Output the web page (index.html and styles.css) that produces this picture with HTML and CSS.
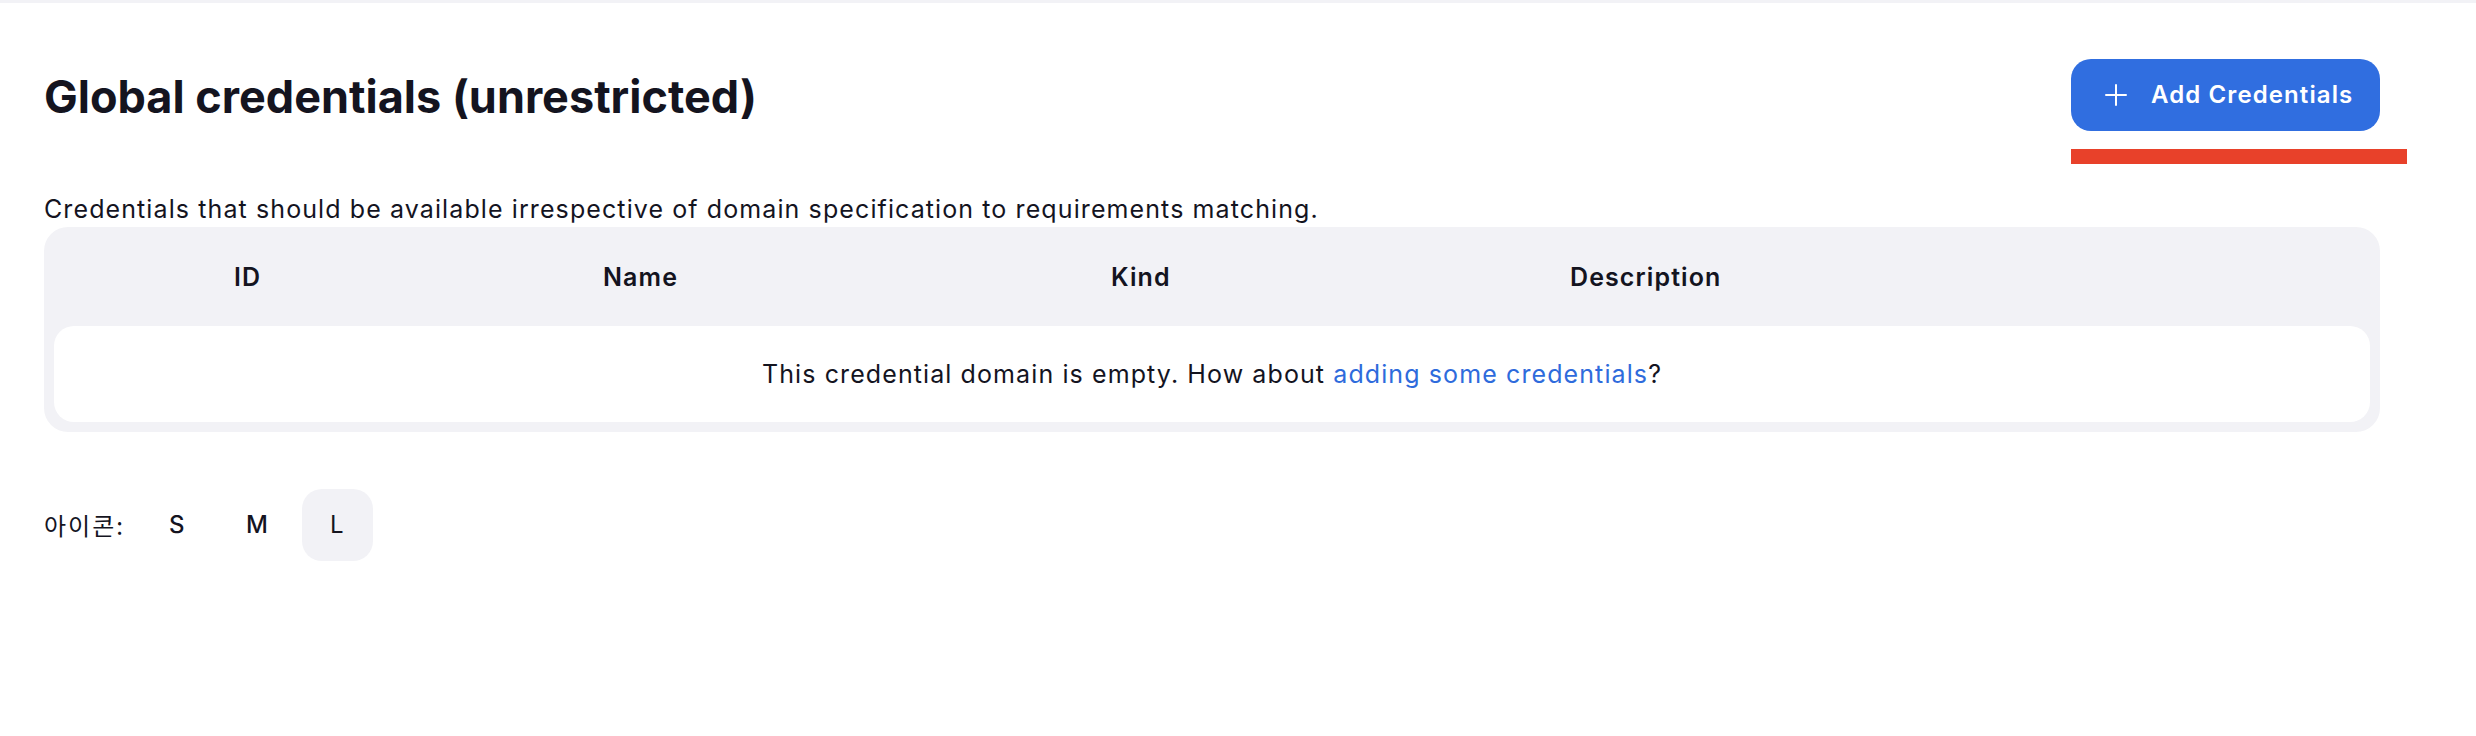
FILE: index.html
```html
<!DOCTYPE html>
<html lang="en">
<head>
<meta charset="utf-8">
<title>Global credentials (unrestricted)</title>
<link rel="stylesheet" href="styles.css">
</head>
<body>
<div class="top-strip"></div>
<main class="page">
  <div class="app-bar">
    <h1 class="title">Global credentials (unrestricted)</h1>
    <div class="actions">
      <a class="btn-primary" href="#">
        <svg class="plus" viewBox="0 0 22 22" width="22" height="22" aria-hidden="true"><path d="M11 1v20M1 11h20" stroke="currentColor" stroke-width="2" stroke-linecap="round" fill="none"/></svg>
        <span>Add Credentials</span>
      </a>
      <div class="annotation-bar"></div>
    </div>
  </div>
  <p class="desc">Credentials that should be available irrespective of domain specification to requirements matching.</p>
  <div class="table">
    <div class="thead">
      <div class="th th-icon"></div>
      <div class="th th-id">ID</div>
      <div class="th th-name">Name</div>
      <div class="th th-kind">Kind</div>
      <div class="th th-desc">Description</div>
    </div>
    <p class="empty">This credential domain is empty. How about <a href="#">adding some credentials</a>?</p>
  </div>
  <div class="icon-size">
    <span class="icon-label">아이콘:</span>
    <div class="sizes">
      <span class="size">S</span>
      <span class="size">M</span>
      <span class="size active">L</span>
    </div>
  </div>
</main>
</body>
</html>
```

FILE: styles.css
```css
* { box-sizing: border-box; }
html, body { margin: 0; padding: 0; background: #ffffff; }
body {
  font-family: Inter, "Noto Sans", "Noto Sans CJK KR", sans-serif;
  color: #14141f;
  font-size: 24px;
  line-height: 1.5;
  letter-spacing: 1.1px;
}
.top-strip { height: 3px; background: #f2f2f6; }
.page { padding: 56px 96px 0 44px; }
.app-bar {
  display: flex;
  align-items: center;
  justify-content: space-between;
  height: 72px;
}
.title {
  margin: 0;
  padding-top: 3px;
  font-size: 45px;
  font-weight: 700;
  line-height: 1.2;
  letter-spacing: 0;
  color: #14141f;
}
.actions { position: relative; }
.btn-primary {
  display: flex;
  align-items: center;
  gap: 24px;
  height: 72px;
  width: 309px;
  padding: 0 20px 0 34px;
  border-radius: 20px;
  background: #306ee0;
  color: #ffffff;
  text-decoration: none;
  font-weight: 600;
  font-size: 24px;
}
.plus { flex: none; }
.annotation-bar {
  position: absolute;
  left: 0;
  top: 90px;
  width: 336px;
  height: 15px;
  background: #e8412a;
}
.desc { margin: 60px 0 0; font-size: 25px; line-height: 36px; }
.table {
  background: #f2f2f6;
  border-radius: 24px;
  padding: 10px;
  font-size: 25px;
}
.thead {
  display: grid;
  grid-template-columns: 180px 369px 508px 459px 1fr;
  height: 79px;
  padding-top: 2px;
  align-items: center;
  font-weight: 600;
  margin-bottom: 10px;
}
.empty {
  margin: 0;
  background: #ffffff;
  border-radius: 20px;
  height: 96px;
  line-height: 96px;
  text-align: center;
}
.empty a { color: #2e6bdc; text-decoration: none; }
.icon-size {
  display: flex;
  align-items: center;
  gap: 17px;
  margin-top: 57px;
}
.icon-label { font-family: "Noto Sans CJK KR", Inter, sans-serif; font-size: 24px; letter-spacing: 2px; }
.sizes { display: flex; gap: 9px; }
.size {
  width: 71px;
  height: 72px;
  display: flex;
  align-items: center;
  justify-content: center;
  border-radius: 20px;
  font-weight: 500;
}
.size.active { background: #f2f2f6; font-weight: 400; }
```
